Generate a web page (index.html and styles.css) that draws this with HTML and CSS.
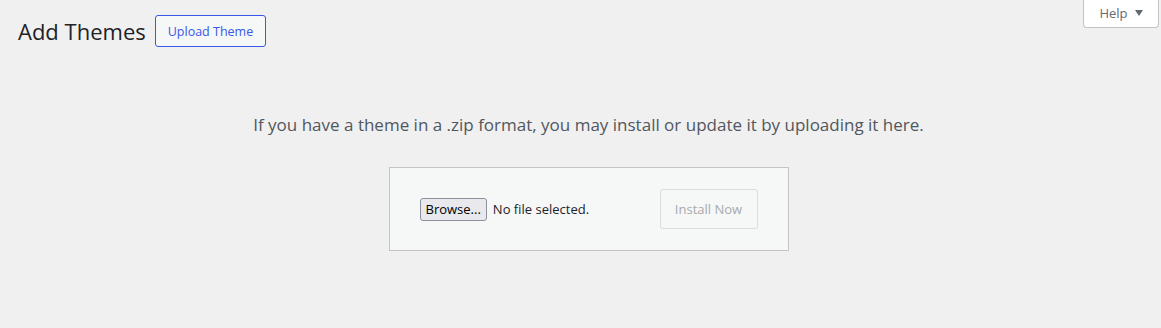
FILE: index.html
```html
<!DOCTYPE html>
<html lang="en">
<head>
    <meta charset="UTF-8">
    <meta name="viewport" content="width=device-width, initial-scale=1.0">
    <title>Add Themes</title>
    <link rel="stylesheet" href="styles.css">
</head>
<body>
    <!-- BEGIN::screen-meta -->
    <div class="screen-meta">
        <button class="help-toggle" type="button">Help <span class="arrow"></span></button>
    </div>
    <!-- END::screen-meta -->
    <!-- BEGIN::wrap -->
    <div class="wrap">
        <div class="page-head">
            <h1>Add Themes</h1>
            <a class="page-title-action" href="#">Upload Theme</a>
        </div>
        <!-- BEGIN::upload-theme -->
        <div class="upload-theme">
            <p class="install-help">If you have a theme in a .zip format, you may install or update it by uploading it here.</p>
            <form class="upload-form">
                <span class="file-field">
                    <span class="browse">Browse...</span>
                    <span class="file-name">No file selected.</span>
                </span>
                <button class="install-button" type="button" disabled>Install Now</button>
            </form>
        </div>
        <!-- END::upload-theme -->
    </div>
    <!-- END::wrap -->
</body>
</html>
```

FILE: styles.css
```css
*{
    margin: 0;
    padding: 0;
    box-sizing: border-box;
}

body{
    background: #f0f0f1;
    color: #3c434a;
    font-family: "Open Sans", "Noto Sans", sans-serif;
    font-size: 13px;
    height: 328px;
    overflow: hidden;
}

.screen-meta{
    display: flex;
    justify-content: flex-end;
    padding-right: 2px;
    height: 0;
}

.help-toggle{
    width: 76px;
    height: 28px;
    background: #fff;
    border: 1px solid #c3c4c7;
    border-top: none;
    border-radius: 0 0 4px 4px;
    color: #646970;
    font-family: inherit;
    font-size: 13px;
    display: flex;
    align-items: center;
    justify-content: center;
    gap: 7px;
    padding-bottom: 2px;
}

.arrow{
    width: 0;
    height: 0;
    border-left: 4px solid transparent;
    border-right: 4px solid transparent;
    border-top: 6px solid #646970;
    margin-top: 1px;
}

.wrap{
    padding: 0 2px 0 18px;
}

.page-head{
    display: flex;
    align-items: center;
    gap: 9px;
    padding-top: 15px;
}

h1{
    font-size: 22px;
    font-weight: 400;
    color: #1d2327;
    line-height: 31px;
}

.page-title-action{
    display: inline-flex;
    align-items: center;
    height: 32px;
    padding: 0 12px;
    border: 1px solid #3858e9;
    border-radius: 3px;
    color: #3858e9;
    background: #f6f7f7;
    text-decoration: none;
    font-size: 12.5px;
}

.upload-theme{
    display: flex;
    flex-direction: column;
    align-items: center;
}

.install-help{
    margin-top: 66px;
    font-size: 17px;
    color: #50575e;
    line-height: 24px;
}

.upload-form{
    margin-top: 30px;
    width: 400px;
    height: 84px;
    background: #f6f7f7;
    border: 1px solid #c3c4c7;
    display: flex;
    align-items: center;
    justify-content: space-between;
    padding: 0 30px;
}

.file-field{
    display: flex;
    align-items: center;
    gap: 6px;
    font-size: 13px;
    color: #1d2327;
}

.browse{
    border: 1px solid #8f8f9d;
    border-radius: 3px;
    background: #e9e9ed;
    padding: 1px 5px;
    height: 23px;
    line-height: 19px;
    color: #000;
}

.install-button{
    width: 98px;
    height: 40px;
    background: #f6f7f7;
    border: 1px solid #dcdcde;
    border-radius: 3px;
    color: #a7aaad;
    font-family: inherit;
    font-size: 13px;
}
```
